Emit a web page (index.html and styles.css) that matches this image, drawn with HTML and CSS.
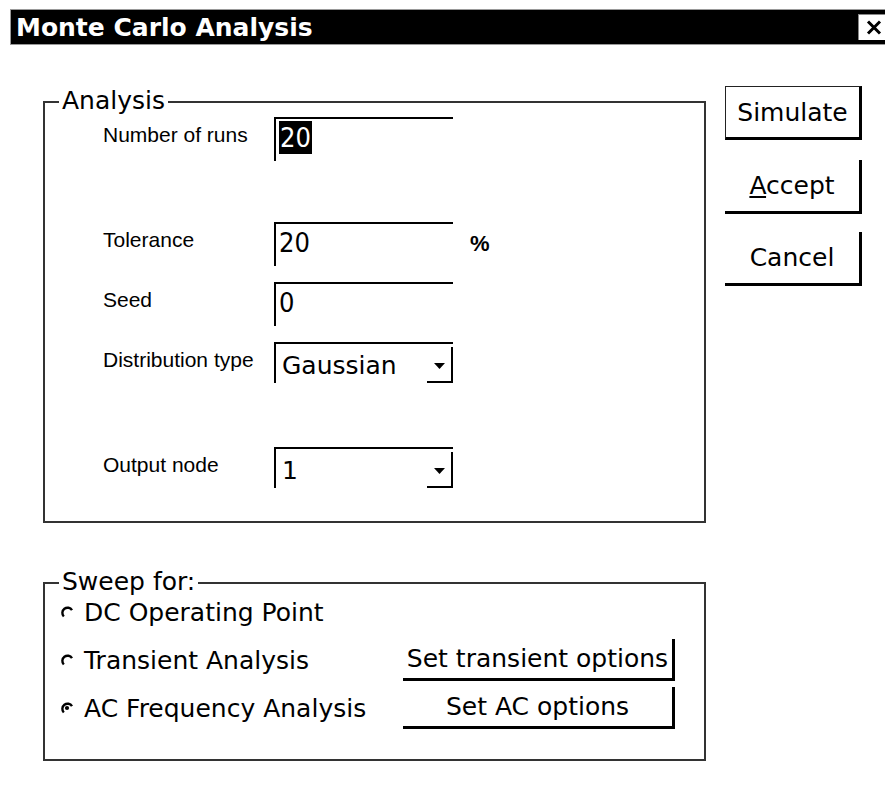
FILE: index.html
```html
<!DOCTYPE html>
<html lang="en">
<head>
<meta charset="utf-8">
<title>Monte Carlo Analysis</title>
<link rel="stylesheet" href="styles.css">
</head>
<body>
<div class="titlebar">
  <span class="title">Monte Carlo Analysis</span>
  <span class="close"><svg width="16" height="15" viewBox="0 0 16 15"><path d="M2 1.5 L14 13.5 M14 1.5 L2 13.5" stroke="#000" stroke-width="3" fill="none"/></svg></span>
</div>
<div class="dialog">
  <div class="main">
    <section class="group analysis">
      <div class="group-title">Analysis</div>
      <div class="fields">
        <div class="frow first">
          <span class="flabel">Number of runs</span>
          <span class="field"><span class="val sel">20</span></span>
        </div>
        <div class="frow gap-lg">
          <span class="flabel">Tolerance</span>
          <span class="field"><span class="val">20</span></span>
          <span class="unit">%</span>
        </div>
        <div class="frow gap-sm">
          <span class="flabel">Seed</span>
          <span class="field"><span class="val">0</span></span>
        </div>
        <div class="frow gap-sm combo-row">
          <span class="flabel">Distribution type</span>
          <span class="combo"><span class="cval">Gaussian</span><span class="drop"><svg width="11" height="6" viewBox="0 0 11 6"><polygon points="0,0 11,0 5.5,6" fill="#000"/></svg></span></span>
        </div>
        <div class="frow gap-xl combo-row">
          <span class="flabel">Output node</span>
          <span class="combo"><span class="cval">1</span><span class="drop"><svg width="11" height="6" viewBox="0 0 11 6"><polygon points="0,0 11,0 5.5,6" fill="#000"/></svg></span></span>
        </div>
      </div>
    </section>
    <section class="group sweep">
      <div class="group-title">Sweep for:</div>
      <div class="sweep-grid">
        <div class="radio"><svg class="rad" width="14" height="14" viewBox="0 0 14 14"><path d="M3.8 11.5 A5.2 5.2 0 1 1 12 5.2" stroke="#000" stroke-width="2.4" fill="none"/></svg><span>DC Operating Point</span></div>
        <div></div>
        <div class="radio"><svg class="rad" width="14" height="14" viewBox="0 0 14 14"><path d="M3.8 11.5 A5.2 5.2 0 1 1 12 5.2" stroke="#000" stroke-width="2.4" fill="none"/></svg><span>Transient Analysis</span></div>
        <div class="sbtn">Set transient options</div>
        <div class="radio"><svg class="rad" width="14" height="14" viewBox="0 0 14 14"><path d="M3.8 11.5 A5.2 5.2 0 1 1 12 5.2" stroke="#000" stroke-width="2.4" fill="none"/><circle cx="7" cy="7" r="2.1" fill="#000"/></svg><span>AC Frequency Analysis</span></div>
        <div class="sbtn">Set AC options</div>
      </div>
    </section>
  </div>
  <div class="actions">
    <div class="btn default">Simulate</div>
    <div class="btn accept"><span><u>A</u>ccept</span></div>
    <div class="btn cancel">Cancel</div>
  </div>
</div>
</body>
</html>
```
FILE: styles.css
```css
html, body {
  margin: 0;
  background: #fff;
}
body {
  font-family: "DejaVu Sans", sans-serif;
  color: #000;
}

.titlebar {
  margin: 9px 0 0 10px;
  height: 34px;
  background: #000;
  border: 1px solid #999;
  border-right: none;
  display: flex;
  align-items: center;
  overflow: hidden;
}
.title {
  color: #fff;
  font-weight: bold;
  font-size: 25px;
  padding-left: 5px;
  white-space: nowrap;
}
.close {
  margin-left: auto;
  width: 27px;
  height: 26px;
  background: #fff;
  border-left: 1px solid #888;
  border-top: 1px solid #888;
  box-sizing: border-box;
  display: flex;
  align-items: center;
  padding-left: 7px;
}

.dialog {
  display: flex;
  padding: 41px 0 0 43px;
}
.main {
  width: 663px;
}

.group {
  border: 2px solid #333;
}
.group-title {
  width: fit-content;
  margin: -16px 0 0 14px;
  padding: 0 3px;
  height: 28px;
  line-height: 28px;
  font-size: 25px;
  background: #fff;
}

.analysis {
  margin-top: 15px;
  padding-bottom: 33px;
}
.fields {
  padding-left: 58px;
}
.frow {
  display: flex;
  height: 44px;
}
.frow.first { margin-top: 2px; }
.frow.gap-sm { margin-top: 16px; }
.frow.gap-lg { margin-top: 61px; }
.frow.gap-xl { margin-top: 64px; }
.frow.combo-row { height: 41px; }

.flabel {
  width: 171px;
  flex: none;
  align-self: flex-start;
  padding-top: 6px;
  font-family: "Liberation Sans", Arial, sans-serif;
  font-size: 21px;
  line-height: 24px;
}
.field {
  width: 179px;
  height: 44px;
  box-sizing: border-box;
  border-top: 2px solid #000;
  border-left: 2px solid #000;
  padding: 2px 0 0 3px;
  font-family: "Liberation Sans Narrow", "DejaVu Sans Condensed", "Liberation Sans", sans-serif;
  font-size: 27px;
}
.val {
  display: inline-block;
  line-height: 33px;
  height: 33px;
  vertical-align: top;
}
.sel {
  background: #000;
  color: #fff;
  padding: 0 1px;
}
.unit {
  align-self: center;
  margin-left: 17px;
  font-family: "Liberation Sans", Arial, sans-serif;
  font-weight: bold;
  font-size: 22px;
}

.combo {
  width: 179px;
  height: 41px;
  box-sizing: border-box;
  border-top: 2px solid #000;
  border-left: 2px solid #000;
  display: flex;
}
.cval {
  flex: 1;
  padding: 7px 0 0 6px;
  font-size: 25px;
  line-height: 29px;
}
.drop {
  align-self: flex-end;
  width: 26px;
  height: 36px;
  box-sizing: border-box;
  border-right: 2px solid #000;
  border-bottom: 2px solid #000;
  display: flex;
  align-items: center;
  justify-content: center;
  padding-top: 3px;
}

.sweep {
  margin-top: 59px;
  padding-bottom: 27px;
}
.sweep-grid {
  margin: -8px 0 0 15px;
  display: grid;
  grid-template-columns: 343px 272px;
  grid-auto-rows: 48px;
  align-items: center;
  font-size: 25px;
  line-height: 29px;
}
.radio {
  display: flex;
  align-items: center;
  gap: 10px;
  white-space: nowrap;
}
.rad { flex: none; }
.sbtn {
  height: 42px;
  box-sizing: border-box;
  border-right: 3px solid #000;
  border-bottom: 3px solid #000;
  display: flex;
  align-items: center;
  justify-content: center;
  white-space: nowrap;
}

.actions {
  margin-left: 19px;
  width: 137px;
  display: flex;
  flex-direction: column;
}
.btn {
  height: 54px;
  box-sizing: border-box;
  border-right: 3px solid #000;
  border-bottom: 3px solid #000;
  display: flex;
  align-items: center;
  justify-content: center;
  font-size: 25px;
}
.btn.default {
  border-top: 1px solid #222;
  border-left: 1px solid #222;
}
.btn.accept { margin-top: 20px; }
.btn.cancel { margin-top: 18px; }
```
